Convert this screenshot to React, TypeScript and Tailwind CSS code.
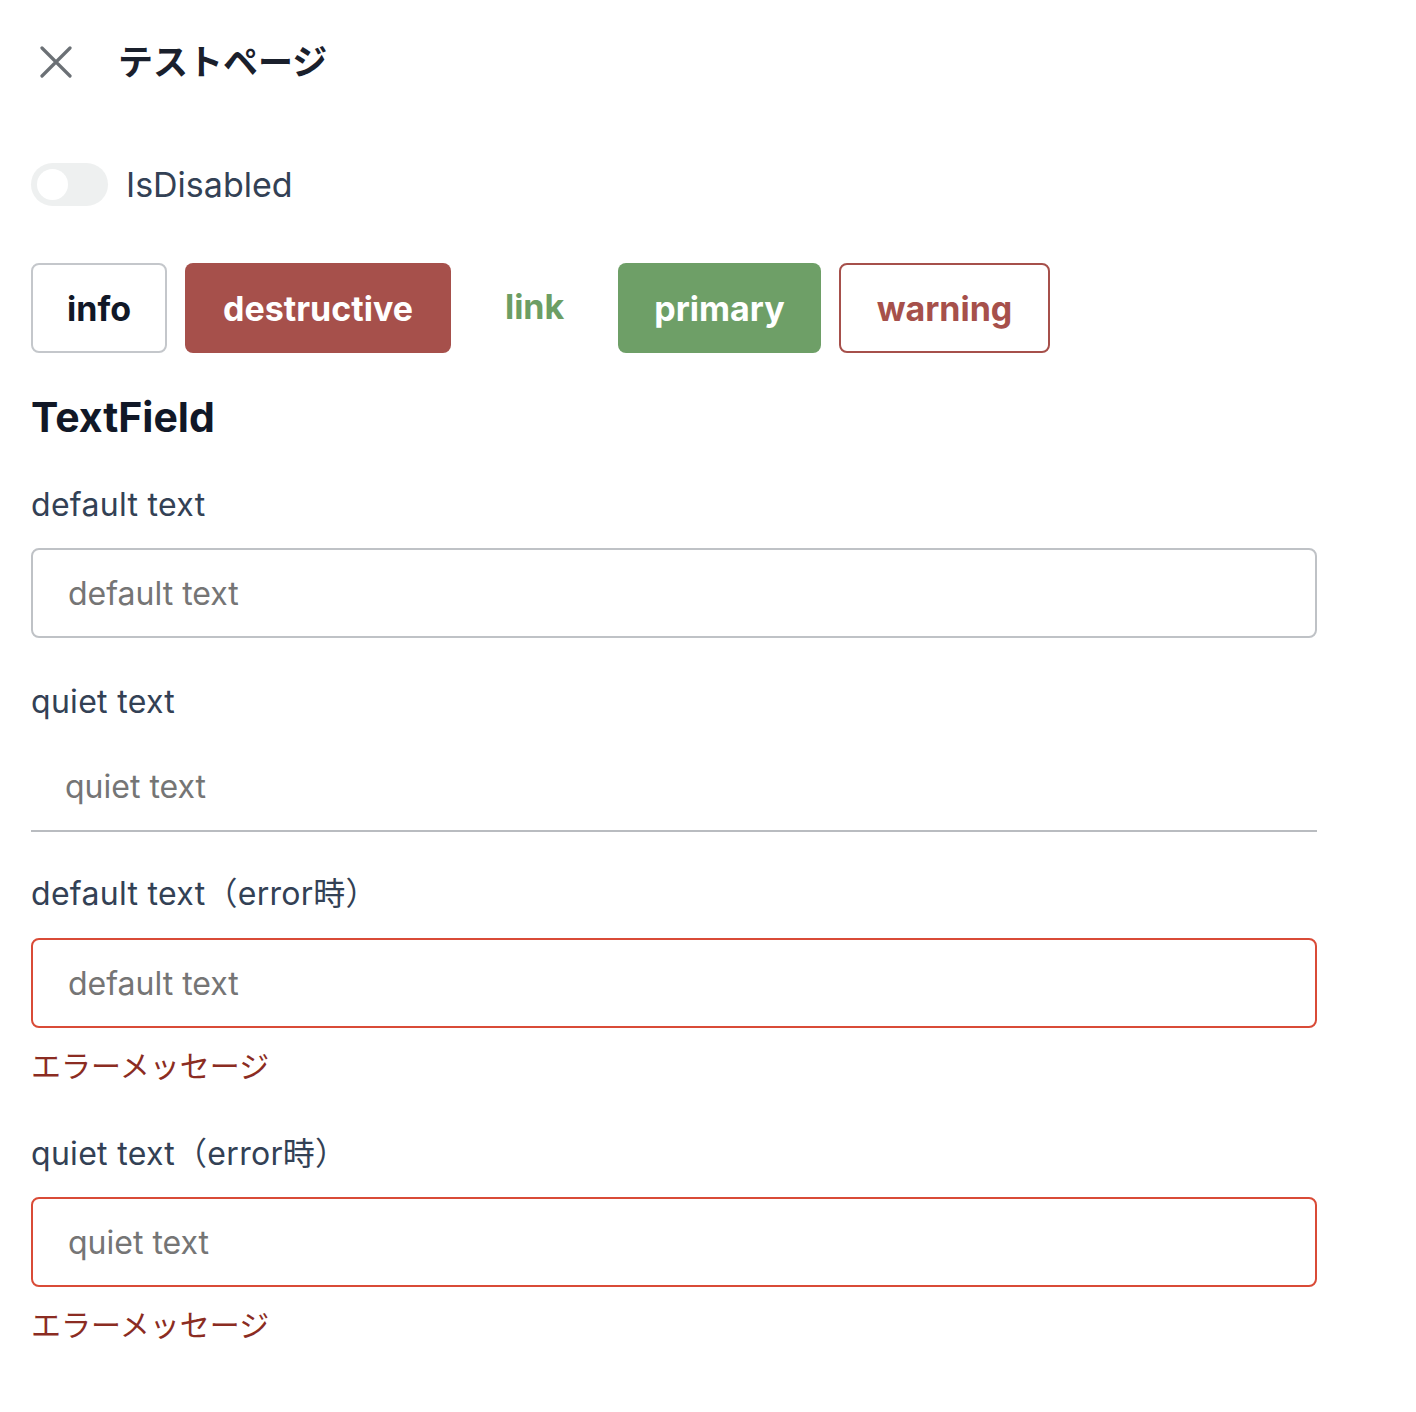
import React from "react";

const font = "font-['Inter','Noto_Sans_CJK_JP',sans-serif]";

const buttons = [
  { label: "info", className: "px-[34px] border-2 border-[#c4c7cb] text-[#111827] bg-white" },
  { label: "destructive", className: "px-[38px] bg-[#a6504b] text-white" },
  { label: "link", className: "px-[36px] text-[#6c9e64]" },
  { label: "primary", className: "px-[36px] bg-[#6e9f67] text-white" },
  { label: "warning", className: "px-[36px] border-2 border-[#a6504b] text-[#a6504b] bg-white" },
];

const Label = ({ children, mt }: { children: React.ReactNode; mt: string }) => (
  <label className={`block ${mt} text-[32px] leading-[48px] tracking-[0.3px] text-[#334155]`}>{children}</label>
);

const ErrorMessage = () => (
  <p className="mt-[16px] text-[30px] leading-[45px] text-[#8b2c22]">エラーメッセージ</p>
);

export default function App() {
  return (
    <div className={`${font} bg-white min-h-[1412px] w-[1416px] pl-[31px] pr-[99px]`}>
      <header className="h-[124px] flex items-center">
        <button className="ml-[9px] w-[32px] h-[32px] flex items-center justify-center">
          <svg width="32" height="32" viewBox="0 0 32 32" fill="none">
            <path d="M2 2L30 30M30 2L2 30" stroke="#6b7075" strokeWidth="3.2" strokeLinecap="round" />
          </svg>
        </button>
        <h1 className="ml-[46px] text-[35px] font-bold text-[#1a202c]">テストページ</h1>
      </header>

      <div className="mt-[39px] flex items-center h-[43px]">
        <div className="w-[77px] h-[43px] rounded-full bg-[#eef0f0] flex items-center px-[6px]">
          <div className="w-[31px] h-[31px] rounded-full bg-white" />
        </div>
        <span className="ml-[18px] text-[34px] text-[#334155]">IsDisabled</span>
      </div>

      <div className="mt-[57px] flex gap-[18px]">
        {buttons.map((b) => (
          <button
            key={b.label}
            className={`h-[90px] rounded-[8px] text-[34px] font-bold flex items-center ${b.className}`}
          >
            <span className={b.label === "link" ? "-mt-[4px]" : ""}>{b.label}</span>
          </button>
        ))}
      </div>

      <h2 className="mt-[40px] text-[41px] leading-[48px] font-bold text-[#111827]">TextField</h2>

      <Label mt="mt-[40px]">default text</Label>
      <input
        placeholder="default text"
        className="mt-[19px] block w-full h-[90px] px-[35px] rounded-[8px] border-2 border-[#bfc2c6] text-[32px] placeholder:text-[#757575] outline-none"
      />

      <Label mt="mt-[40px]">quiet text</Label>
      <input
        placeholder="quiet text"
        className="mt-[16px] block w-full h-[90px] px-[34px] border-b-2 border-[#b9bcc0] text-[32px] placeholder:text-[#757575] outline-none"
      />

      <Label mt="mt-[38px]">default text（error時）</Label>
      <input
        placeholder="default text"
        className="mt-[20px] block w-full h-[90px] px-[35px] rounded-[8px] border-2 border-[#d94b37] text-[32px] placeholder:text-[#757575] outline-none"
      />
      <ErrorMessage />

      <Label mt="mt-[41px]">quiet text（error時）</Label>
      <input
        placeholder="quiet text"
        className="mt-[19px] block w-full h-[90px] px-[35px] rounded-[8px] border-2 border-[#d94b37] text-[32px] placeholder:text-[#757575] outline-none"
      />
      <ErrorMessage />
    </div>
  );
}
